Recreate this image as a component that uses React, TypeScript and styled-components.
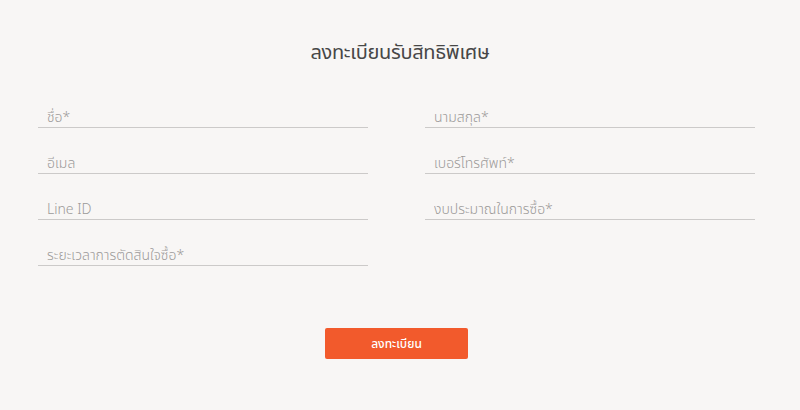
import styled, { createGlobalStyle } from "styled-components";

const GlobalStyle = createGlobalStyle`
  html, body {
    margin: 0;
    padding: 0;
    background-color: #f8f6f5;
  }
  body {
    font-family: "Noto Sans", "Noto Sans Thai", "Liberation Sans", sans-serif;
  }
`;

const leftFields = ["ชื่อ*", "อีเมล", "Line ID", "ระยะเวลาการตัดสินใจซื้อ*"];
const rightFields = ["นามสกุล*", "เบอร์โทรศัพท์*", "งบประมาณในการซื้อ*"];

const App = () => {
  return (
    <>
      <GlobalStyle />
      <StyledPage>
        <Title>ลงทะเบียนรับสิทธิพิเศษ</Title>
        <FormGrid>
          <Column>
            {leftFields.map((field) => (
              <Field key={field} type="text" placeholder={field} />
            ))}
          </Column>
          <Column>
            {rightFields.map((field) => (
              <Field key={field} type="text" placeholder={field} />
            ))}
          </Column>
        </FormGrid>
        <SubmitButton type="button">ลงทะเบียน</SubmitButton>
      </StyledPage>
    </>
  );
};

export default App;

const StyledPage = styled.div`
  width: 800px;
  height: 410px;
  box-sizing: border-box;
  padding-top: 37px;
  display: flex;
  flex-direction: column;
  align-items: center;
`;

const Title = styled.h1`
  margin: 0 0 15px;
  height: 30px;
  line-height: 30px;
  font-size: 20px;
  font-weight: 400;
  color: #474747;
  letter-spacing: -0.3px;
`;

const FormGrid = styled.div`
  align-self: flex-start;
  margin-left: 38px;
  display: grid;
  grid-template-columns: 330px 330px;
  column-gap: 57px;
`;

const Column = styled.div`
  display: flex;
  flex-direction: column;
`;

const Field = styled.input`
  box-sizing: border-box;
  width: 100%;
  height: 46px;
  padding: 25px 9px 2px;
  border: none;
  border-bottom: 1px solid #cccac9;
  background: transparent;
  font-family: inherit;
  font-size: 14px;
  font-weight: 300;
  color: #555;
  outline: none;

  &::placeholder {
    color: #9c9a99;
  }
`;

const SubmitButton = styled.button`
  margin-top: 62px;
  margin-right: 7px;
  width: 143px;
  height: 31px;
  border: none;
  border-radius: 2px;
  background-color: #f25a2c;
  color: #fff;
  font-family: inherit;
  font-size: 12px;
  font-weight: 500;
  cursor: pointer;
`;
